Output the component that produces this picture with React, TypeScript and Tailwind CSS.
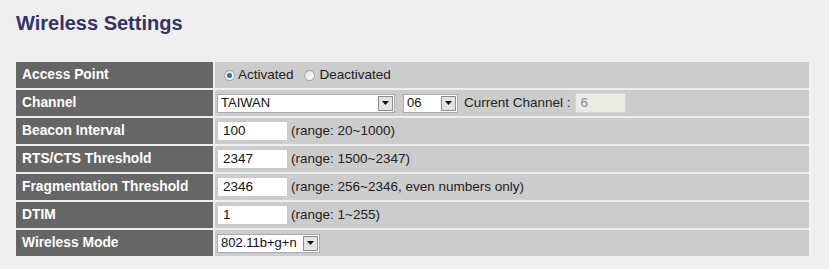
import type { ReactNode } from 'react'

// Champ select "classique" : zone blanche + bouton flèche gris
function Select({ value, width }: { value: string; width: number }) {
  return (
    <div
      className="flex h-[19px] items-stretch border border-[#a5acb5] bg-white"
      style={{ width }}
    >
      <span className="flex flex-1 items-center overflow-hidden pl-[3px] text-[13px] whitespace-nowrap text-[#111]">
        {value}
      </span>
      <span className="m-[1px] flex w-[15px] items-center justify-center border border-[#8d8d8d] bg-[#e3e3e3]">
        <svg width="7" height="4" viewBox="0 0 7 4">
          <path d="M0 0h7L3.5 4z" fill="#111" />
        </svg>
      </span>
    </div>
  )
}

function TextInput({ value, disabled }: { value: string; disabled?: boolean }) {
  return (
    <div
      className={`flex h-[20px] items-center border pl-[5px] text-[13.5px] ${
        disabled
          ? 'w-[51px] border-[#d6d6d0] bg-[#ebebe4] text-[#8c8c8c]'
          : 'w-[71px] border-[#c9c9c9] bg-white text-[#111]'
      }`}
    >
      {value}
    </div>
  )
}

function Radio({ checked }: { checked?: boolean }) {
  return (
    <span className="flex h-[11px] w-[11px] items-center justify-center rounded-full border border-[#9aa3ad] bg-gradient-to-br from-[#dcdcdc] to-white">
      {checked && <span className="h-[5px] w-[5px] rounded-full bg-[#2a6fbf]" />}
    </span>
  )
}

function Row({ label, children }: { label: string; children: ReactNode }) {
  return (
    <>
      <div className="flex h-[26px] items-center bg-[#666666] pl-[6px] text-[13.8px] font-bold text-white">
        {label}
      </div>
      <div className="flex h-[26px] items-center gap-[3px] bg-[#cccccc] pl-[2px] text-[13.5px] text-[#222]">
        {children}
      </div>
    </>
  )
}

export default function App() {
  return (
    <div
      className="h-[269px] w-[829px] bg-[#efefef]"
      style={{ fontFamily: '"Liberation Sans", Arial, sans-serif' }}
    >
      <h1 className="pl-[16px] pt-[12px] text-[20px] leading-[23px] font-bold text-[#333366]">
        Wireless Settings
      </h1>

      <div className="mt-[27px] ml-[16px] grid w-[793px] grid-cols-[197px_594px] gap-[2px]">
        <Row label="Access Point">
          <span className="ml-[7px] flex items-center gap-[3px]">
            <Radio checked />
            <span>Activated</span>
          </span>
          <span className="ml-[7px] flex items-center gap-[5px]">
            <Radio />
            <span>Deactivated</span>
          </span>
        </Row>
        <Row label="Channel">
          <Select value="TAIWAN" width={178} />
          <span className="ml-[5px]">
            <Select value="06" width={55} />
          </span>
          <span className="ml-[3px]">Current Channel :</span>
          <span className="ml-[1px]">
            <TextInput value="6" disabled />
          </span>
        </Row>
        <Row label="Beacon Interval">
          <TextInput value="100" />
          <span>(range: 20~1000)</span>
        </Row>
        <Row label="RTS/CTS Threshold">
          <TextInput value="2347" />
          <span>(range: 1500~2347)</span>
        </Row>
        <Row label="Fragmentation Threshold">
          <TextInput value="2346" />
          <span>(range: 256~2346, even numbers only)</span>
        </Row>
        <Row label="DTIM">
          <TextInput value="1" />
          <span>(range: 1~255)</span>
        </Row>
        <Row label="Wireless Mode">
          <Select value="802.11b+g+n" width={103} />
        </Row>
      </div>
    </div>
  )
}
